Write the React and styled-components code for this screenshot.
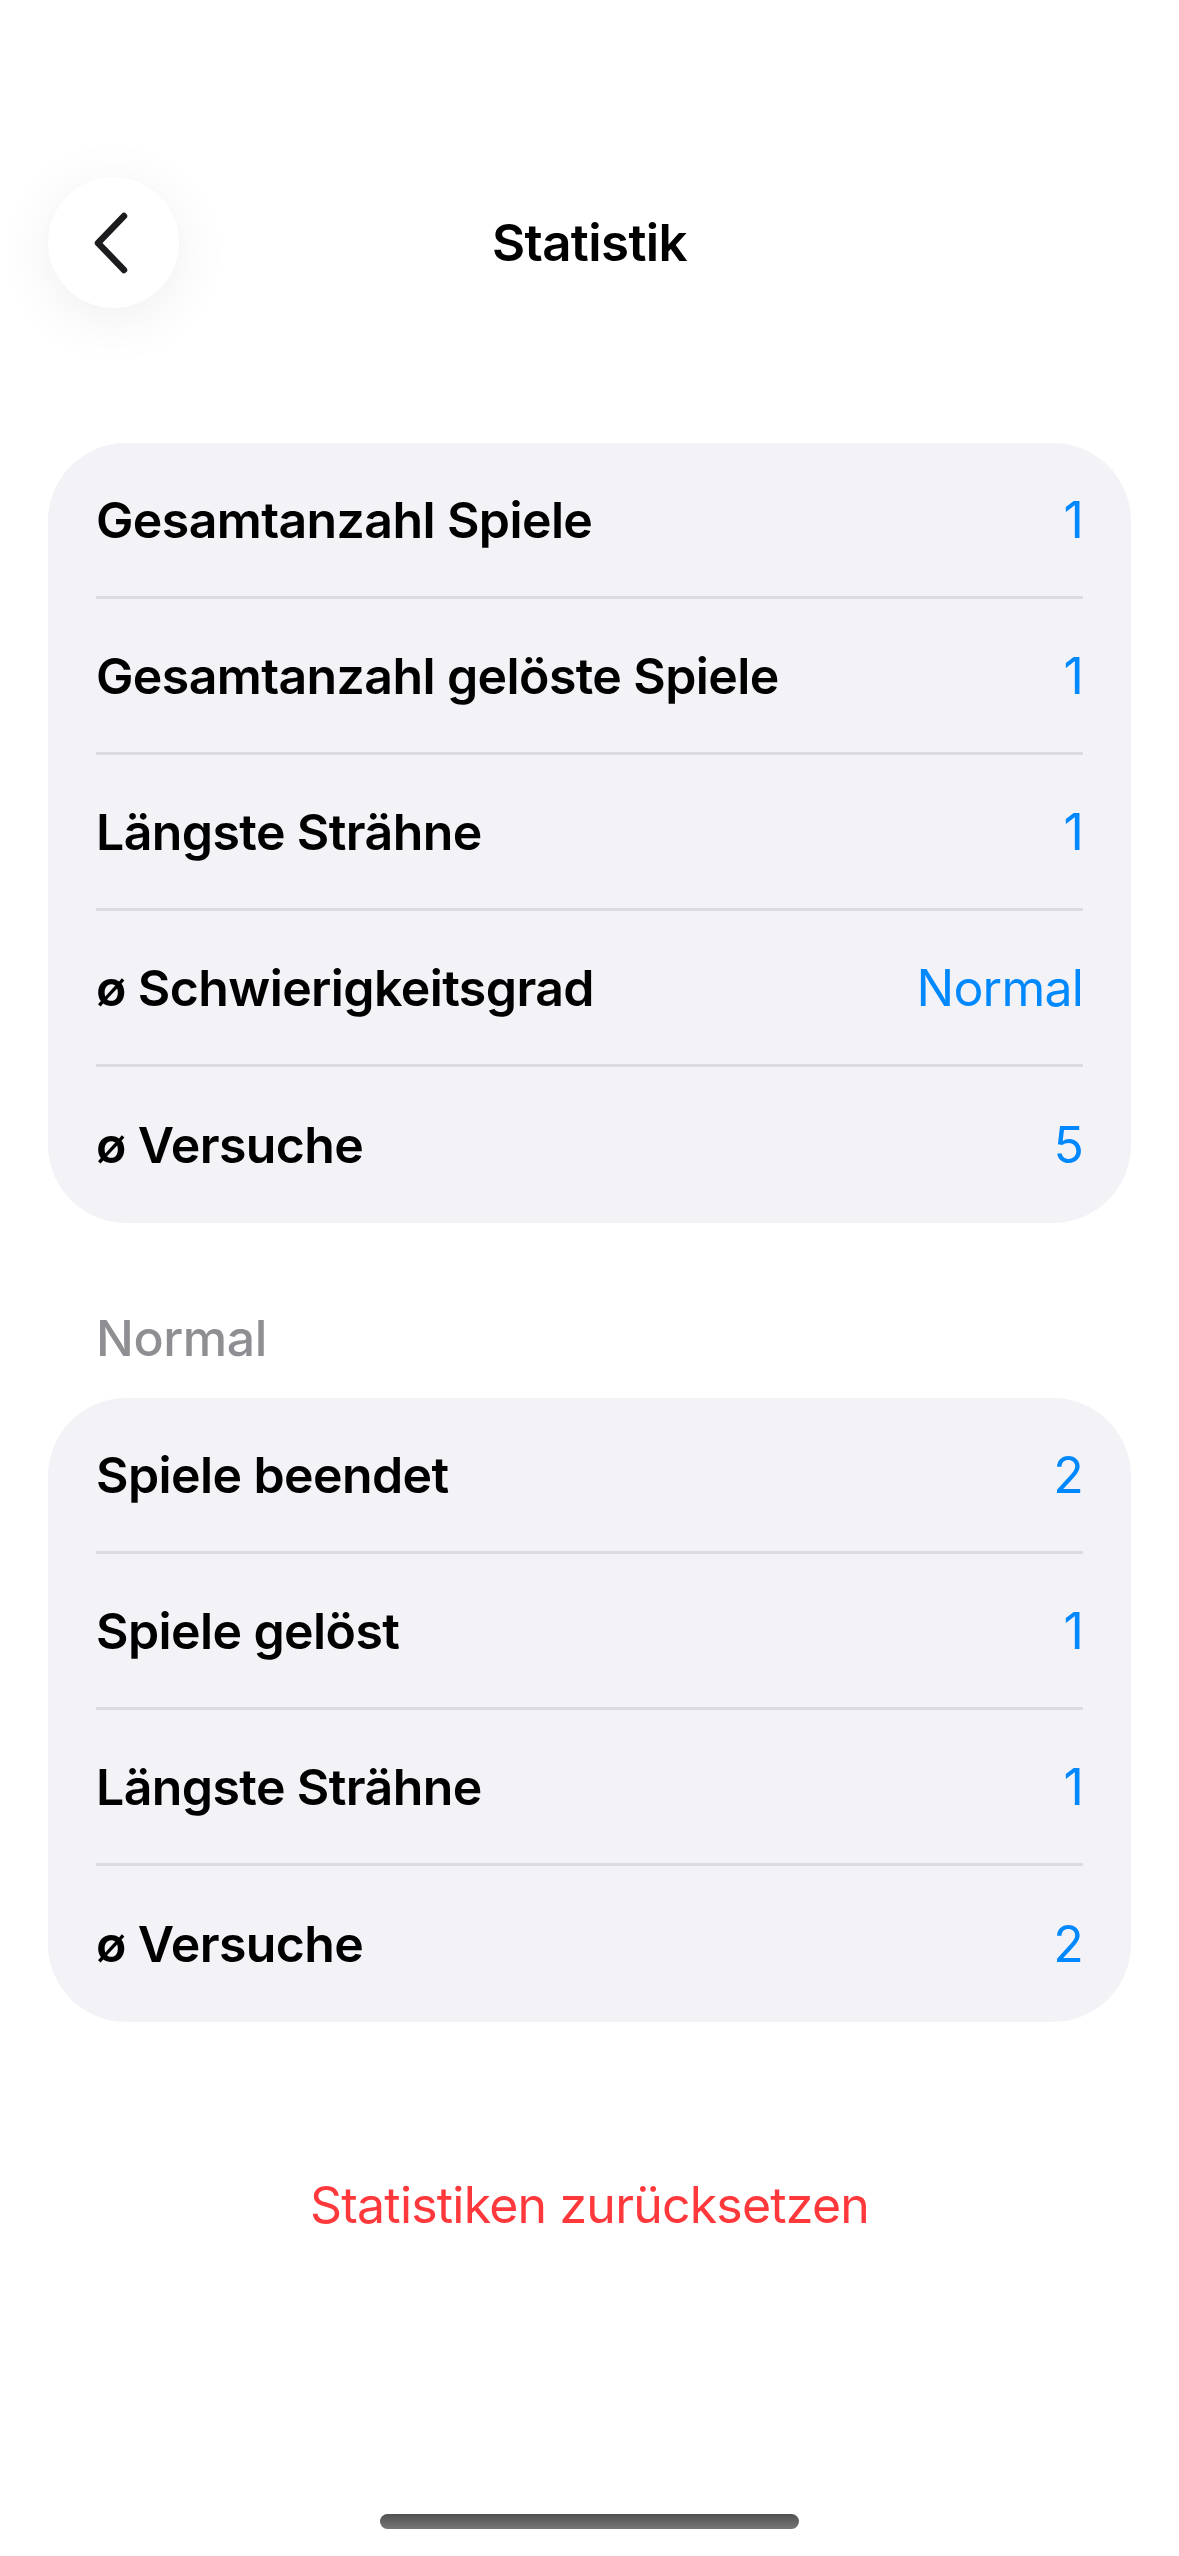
import React from 'react';
import styled, { createGlobalStyle } from 'styled-components';

const GlobalStyle = createGlobalStyle`
    html, body {
        margin: 0;
        padding: 0;
        background: #ffffff;
    }
    body {
        font-family: Inter, "Noto Sans", "Liberation Sans", sans-serif;
        -webkit-font-smoothing: antialiased;
    }
`

const Screen = styled.div`
    box-sizing: border-box;
    width: 1179px;
    min-height: 2556px;
    display: flex;
    flex-direction: column;
    background: #ffffff;
    color: #000000;
`
const Header = styled.div`
    display: grid;
    grid-template-columns: 1fr auto 1fr;
    align-items: center;
    padding: 177px 48px 0 48px;
    height: 131px;
`
const BackButton = styled.button`
    box-sizing: border-box;
    width: 131px;
    height: 131px;
    border: none;
    border-radius: 50%;
    background: #ffffff;
    box-shadow: 0 10px 60px rgba(0, 0, 0, 0.07);
    display: flex;
    align-items: center;
    justify-content: center;
    padding: 0 6px 0 0;
    cursor: pointer;
`
const Title = styled.h1`
    margin: 0;
    font-size: 51px;
    font-weight: 600;
    letter-spacing: -0.6px;
    line-height: 62px;
`
const Card = styled.div`
    margin: ${p => p.$top}px 48px 0 48px;
    padding: 0 48px;
    background: #f2f2f7;
    border-radius: 78px;
`
const Row = styled.div`
    display: flex;
    align-items: center;
    justify-content: space-between;
    height: 153px;
    border-bottom: 3px solid #dcdce0;

    &:last-child {
        border-bottom: none;
        height: 156px;
    }
`
const Label = styled.span`
    font-size: 50px;
    font-weight: 600;
    letter-spacing: -0.6px;
`
const Value = styled.span`
    font-size: 50px;
    font-weight: 400;
    letter-spacing: -0.8px;
    color: #0088ff;
`
const SectionTitle = styled.h2`
    margin: 84px 0 0 0;
    padding: 0 96px;
    font-size: 50px;
    font-weight: 500;
    letter-spacing: -0.4px;
    line-height: 62px;
    color: #8e8e93;
`
const ResetButton = styled.button`
    align-self: center;
    margin-top: 152px;
    border: none;
    background: none;
    padding: 0;
    font-family: inherit;
    font-size: 50px;
    font-weight: 400;
    letter-spacing: -0.8px;
    line-height: 62px;
    color: #ff383c;
    cursor: pointer;
`
const Spacer = styled.div`
    flex: 1;
`
const HomeIndicator = styled.div`
    align-self: center;
    width: 419px;
    height: 15px;
    margin-bottom: 27px;
    border-radius: 8px;
    background: linear-gradient(180deg, #505050, #767676);
`

const overall = [
    { label: 'Gesamtanzahl Spiele', value: '1' },
    { label: 'Gesamtanzahl gelöste Spiele', value: '1' },
    { label: 'Längste Strähne', value: '1' },
    { label: 'ø Schwierigkeitsgrad', value: 'Normal' },
    { label: 'ø Versuche', value: '5' },
]

const normal = [
    { label: 'Spiele beendet', value: '2' },
    { label: 'Spiele gelöst', value: '1' },
    { label: 'Längste Strähne', value: '1' },
    { label: 'ø Versuche', value: '2' },
]

function StatCard({ rows, top }) {
    return (
        <Card $top={top}>
            {rows.map(r => (
                <Row key={r.label}>
                    <Label>{r.label}</Label>
                    <Value>{r.value}</Value>
                </Row>
            ))}
        </Card>
    )
}

export default function App() {
    return (
        <Screen>
            <GlobalStyle />
            <Header>
                <BackButton aria-label="Zurück">
                    <svg width="40" height="62" viewBox="0 0 40 62" fill="none">
                        <path d="M33 4 L7 31 L33 58" stroke="#1c1c1e" strokeWidth="6.5"
                            strokeLinecap="round" strokeLinejoin="round" />
                    </svg>
                </BackButton>
                <Title>Statistik</Title>
                <div />
            </Header>

            <StatCard rows={overall} top={135} />

            <SectionTitle>Normal</SectionTitle>
            <StatCard rows={normal} top={29} />

            <ResetButton>Statistiken zurücksetzen</ResetButton>

            <Spacer />
            <HomeIndicator />
        </Screen>
    )
}
